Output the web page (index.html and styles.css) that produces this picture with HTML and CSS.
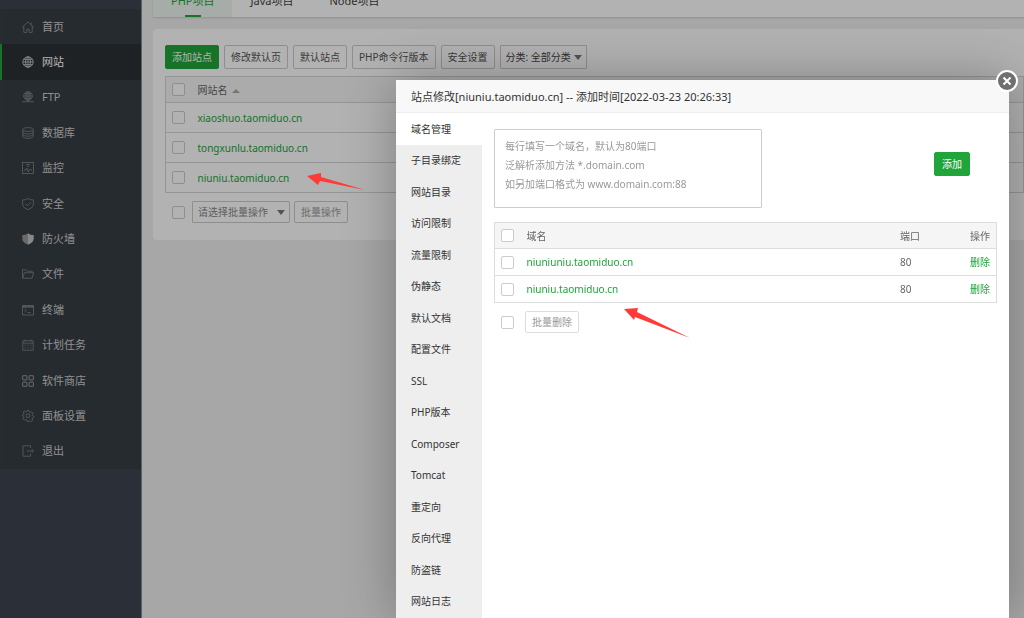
FILE: index.html
```html
<!DOCTYPE html>
<html lang="zh-CN">
<head>
  <meta charset="UTF-8" />
  <meta name="viewport" content="width=device-width, initial-scale=1.0"/>
  <title>网站</title>
  <link rel="stylesheet" href="styles.css">
</head>
<body>

  <div class="app">
    <nav class="sidebar">
      <ul class="menu">
        <li><a href="#"><svg viewBox="0 0 12 12"><path d="M.3 6.400 6 .9l5.700 5.500M1.800 5.200v6.200h3V8.200h2.400v3.200h3V5.200M9.300 1.500v2"/></svg>首页</a></li>
        <li class="active"><a href="#"><svg viewBox="0 0 12 12"><circle cx="6" cy="6" r="5.200"/><ellipse cx="6" cy="6" rx="2.400" ry="5.200"/><path d="M6 .8v10.400M.8 6h10.400M1.600 3.400h8.800M1.600 8.600h8.800"/></svg>网站</a></li>
        <li><a href="#"><svg viewBox="0 0 12 12"><circle cx="6" cy="5" r="4.300"/><ellipse cx="6" cy="5" rx="2" ry="4.300"/><path d="M6 .7v10M1.700 5h8.600M2.400 2.800h7.200M2.400 7.200h7.200M0 10.700h12"/></svg>FTP</a></li>
        <li><a href="#"><svg viewBox="0 0 12 12"><ellipse cx="6" cy="2.500" rx="5.200" ry="1.900"/><path d="M.8 2.500v7c0 2.500 10.400 2.500 10.400 0v-7M.8 5c0 2.500 10.400 2.500 10.400 0M.8 7.300c0 2.500 10.400 2.500 10.400 0"/></svg>数据库</a></li>
        <li><a href="#"><svg viewBox="0 0 12 12"><rect x=".5" y=".5" width="11" height="11"/><path d="M2 8h1.800l1-2 1.500 4 1.500-3 .8 1H10M4 2.500h4M5 4.200h2"/></svg>监控</a></li>
        <li><a href="#"><svg viewBox="0 0 12 12"><path d="M6 .5c1.800 1.200 3.500 1.400 5.400 1.400V6c0 2.800-2.400 4.600-5.400 5.600C3 10.600.6 8.800.6 6V1.900C2.500 1.900 4.200 1.700 6 .5zM3.400 5.700l2 2 3.500-3.500"/></svg>安全</a></li>
        <li><a href="#"><svg viewBox="0 0 12 12"><path class="shield-left" d="M6 .2v11.600C2.500 10.200.3 8.500.3 5.800V2C2.500 2 4.300 1.500 6 .2z"/><path class="shield-right" d="M6 .2v11.600c3.500-1.600 5.700-3.300 5.700-6V2C9.500 2 7.700 1.500 6 .2z"/></svg>防火墙</a></li>
        <li><a href="#"><svg viewBox="0 0 12 12"><path d="M.5 10.200V1.800h3.300L5 3.200h5.200v1.500M.5 10.200l2-5.500h9.200l-1.700 5.500z"/></svg>文件</a></li>
        <li><a href="#"><svg viewBox="0 0 12 12"><path d="M.5 1.500h11v9.500H.5zM.5 2.500h11M.5 3.200h11M2.500 5l1.800 1.500L2.500 8M5.500 8.500h3"/></svg>终端</a></li>
        <li><a href="#"><svg viewBox="0 0 12 12"><path d="M.8 1.800h10.400v9.400H.8zM.8 4.200h10.400M3.200.6v2M8.800.6v2M2.500 6.200h1.200M5.400 6.200h1.200M8.300 6.200h1.200M2.500 8.800h1.200M5.400 8.800h1.200M8.300 8.800h1.200"/></svg>计划任务</a></li>
        <li><a href="#"><svg class="bold" viewBox="0 0 12 12"><rect x=".6" y=".6" width="4.300" height="4.300" rx="1"/><rect x="7.100" y=".6" width="4.300" height="4.300" rx="1"/><rect x=".6" y="7.100" width="4.300" height="4.300" rx="1"/><rect x="7.100" y="7.100" width="4.300" height="4.300" rx="1"/></svg>软件商店</a></li>
        <li><a href="#"><svg viewBox="0 0 12 12"><path d="M5 .6h2l.3 1.500 1 .5 1.400-.8 1.300 1.400-.8 1.300.3 1 1.200.5v1.500l-1.300.5-.4 1 .7 1.300-1.200 1.300-1.400-.7-.9.400L6.800 11.400H5.200l-.5-1.500-.9-.4-1.400.7-1.200-1.300.7-1.300-.4-1L.4 6.100V4.900l1.200-.5.300-1-.7-1.300L2.400.9l1.400.9 1-.4z"/><circle cx="6" cy="5.800" r="1.900"/></svg>面板设置</a></li>
        <li><a href="#"><svg viewBox="0 0 12 12"><path d="M8.500 3V.8H1v10.400h7.500V9M5 6h6.500M9.700 4.200 11.500 6 9.700 7.800"/></svg>退出</a></li>
      </ul>
    </nav>

    <main class="main">
      <div class="tabs">
        <a class="tab on" href="#">PHP项目</a>
        <a class="tab" href="#">Java项目</a>
        <a class="tab" href="#">Node项目</a>
      </div>

      <section class="card">
        <div class="toolbar">
          <button class="btn btn-success">添加站点</button>
          <button class="btn">修改默认页</button>
          <button class="btn">默认站点</button>
          <button class="btn">PHP命令行版本</button>
          <button class="btn">安全设置</button>
          <span class="select-wrap">
            <select class="type-select" aria-label="分类"><option>分类: 全部分类</option></select>
          </span>
        </div>

        <table class="table site-table">
          <thead>
            <tr><th class="check"><input type="checkbox" aria-label="全选"></th><th>网站名<i class="sort"></i></th></tr>
          </thead>
          <tbody>
            <tr><td class="check"><input type="checkbox" aria-label="xiaoshuo.taomiduo.cn"></td><td><a href="#">xiaoshuo.taomiduo.cn</a></td></tr>
            <tr><td class="check"><input type="checkbox" aria-label="tongxunlu.taomiduo.cn"></td><td><a href="#">tongxunlu.taomiduo.cn</a></td></tr>
            <tr><td class="check"><input type="checkbox" aria-label="niuniu.taomiduo.cn"></td><td><a href="#">niuniu.taomiduo.cn</a></td></tr>
          </tbody>
        </table>

        <div class="batch">
          <input type="checkbox" aria-label="全选">
          <span class="select-wrap">
            <select class="batch-select" aria-label="批量操作"><option>请选择批量操作</option></select>
          </span>
          <button class="btn" disabled>批量操作</button>
        </div>
      </section>
    </main>
  </div>

  <div class="shade"></div>
  <svg class="arrow arrow-site" viewBox="0 0 60 20"><path d="M1 4 15 1v4l44 13-45-9-2 4z"/></svg>

  <div class="modal" role="dialog" aria-labelledby="modalTitle">
    <button class="close" aria-label="关闭"><svg viewBox="0 0 24 24"><circle cx="12" cy="12" r="10"/><path d="m8.500 8.500 7 7M15.500 8.500l-7 7"/></svg></button>
    <header class="modal-head" id="modalTitle">站点修改[niuniu.taomiduo.cn] -- 添加时间[2022-03-23 20:26:33]</header>
    <div class="modal-body">
      <div class="modal-side">
        <ul class="side-list">
          <li class="on"><a href="#">域名管理</a></li>
          <li><a href="#">子目录绑定</a></li>
          <li><a href="#">网站目录</a></li>
          <li><a href="#">访问限制</a></li>
          <li><a href="#">流量限制</a></li>
          <li><a href="#">伪静态</a></li>
          <li><a href="#">默认文档</a></li>
          <li><a href="#">配置文件</a></li>
          <li><a href="#">SSL</a></li>
          <li><a href="#">PHP版本</a></li>
          <li><a href="#">Composer</a></li>
          <li><a href="#">Tomcat</a></li>
          <li><a href="#">重定向</a></li>
          <li><a href="#">反向代理</a></li>
          <li><a href="#">防盗链</a></li>
          <li><a href="#">网站日志</a></li>
        </ul>
      </div>

      <div class="modal-content">
        <div class="add-domain">
          <textarea aria-label="域名" placeholder="每行填写一个域名，默认为80端口&#10;泛解析添加方法 *.domain.com&#10;如另加端口格式为 www.domain.com:88"></textarea>
          <button class="btn btn-success">添加</button>
        </div>

        <div class="domain-list">
          <table class="table domain-table">
            <thead>
              <tr><th class="check"><input type="checkbox" aria-label="全选"></th><th>域名</th><th class="port">端口</th><th class="op">操作</th></tr>
            </thead>
            <tbody>
              <tr><td class="check"><input type="checkbox" aria-label="niuniuniu.taomiduo.cn"></td><td><a href="#">niuniuniu.taomiduo.cn</a></td><td class="port">80</td><td class="op"><a href="#">删除</a></td></tr>
              <tr><td class="check"><input type="checkbox" aria-label="niuniu.taomiduo.cn"></td><td><a href="#">niuniu.taomiduo.cn</a></td><td class="port">80</td><td class="op"><a href="#">删除</a></td></tr>
            </tbody>
          </table>
          <svg class="arrow arrow-domain" viewBox="0 0 68 32"><path d="M1 2 15 1l-1 4 53 26-55-21-1 3z"/></svg>
        </div>

        <div class="batch batch-domain">
          <input type="checkbox" aria-label="全选">
          <button class="btn" disabled>批量删除</button>
        </div>
      </div>
    </div>
  </div>

</body>
</html>
```
FILE: styles.css
```css
:root {
  --green: #20a53a;
  --line: #ddd;
  --text: #666;
  --arrow: #ff3b38;
}

* { box-sizing: border-box; }

body {
  margin: 0;
  height: 100vh;
  overflow: hidden;
  background: #f0f0f0;
  color: var(--text);
  font: 10px/18px "Noto Sans", "Noto Sans CJK SC", sans-serif;
}

button, select, textarea, input {
  font: inherit;
  color: inherit;
  margin: 0;
}

a {
  color: var(--green);
  text-decoration: none;
}

ul {
  list-style: none;
  margin: 0;
  padding: 0;
}

.app {
  display: flex;
  height: 100vh;
}

/* sidebar */
.sidebar {
  flex: none;
  width: 142px;
  padding-top: 9px;
  background: #3e444f;
  border-right: 1px solid #858b92;
}

.menu {
  display: grid;
  grid-auto-rows: 1fr;
  min-height: 460px;
  background: #373e45;
}

.menu li {
  border-left: 2px solid #3c4042;
}

.menu a {
  display: flex;
  align-items: center;
  gap: 8px;
  height: 100%;
  padding-left: 20px;
  font-size: 11px;
  color: #cfcfcf;
}

.menu svg {
  width: 12px;
  height: 12px;
  fill: none;
  stroke: #85898d;
  stroke-width: 0.8;
}

.menu svg.bold { stroke-width: 1.2; }

.menu .active {
  background: #2d3136;
  border-left-color: var(--green);
}

.menu .active a { color: #fff; }
.menu .active svg { stroke: #d0d0d0; }

.menu .shield-left { fill: #999; stroke: none; }
.menu .shield-right { fill: #c4c4c4; stroke: none; }

/* main page */
.main {
  flex: 1;
  min-width: 0;
  margin-top: -17px;
  padding-left: 11px;
}

.tabs {
  display: flex;
  height: 34px;
  background: #fff;
  box-shadow: 0 1px 2px #ccc;
}

.tab {
  position: relative;
  padding: 9px 18px;
  font-size: 11px;
  color: #444;
}

.tab.on {
  background: #eef8f1;
  color: var(--green);
}

.tab.on::after {
  content: "";
  position: absolute;
  left: 50%;
  bottom: 0;
  width: 16px;
  height: 2px;
  margin-left: -8px;
  background: var(--green);
}

.card {
  margin-top: 12px;
  padding: 16px 0 17px 12px;
  background: #fff;
  border-radius: 4px 0 0 4px;
}

.toolbar {
  display: flex;
  gap: 5px;
  margin-bottom: 7px;
}

.btn {
  height: 24px;
  padding: 0 6px;
  background: #fff;
  border: 1px solid #ccc;
  border-radius: 2px;
  line-height: 20px;
  color: #555;
  white-space: nowrap;
  cursor: pointer;
}

.btn-success {
  background: var(--green);
  border-color: var(--green);
  color: #fff;
}

.btn:disabled {
  height: 22px;
  color: #999;
  cursor: default;
}

.select-wrap {
  position: relative;
  display: flex;
}

.select-wrap::after {
  content: "";
  position: absolute;
  right: 5px;
  top: 50%;
  margin-top: -2px;
  border: 4px solid transparent;
  border-top: 5px solid #777;
  border-bottom: 0;
  pointer-events: none;
}

select {
  appearance: none;
  height: 22px;
  padding: 0 5px;
  background: #fff;
  border: 1px solid #ccc;
  border-radius: 1px;
}

.type-select {
  width: 87px;
  height: 24px;
  color: #444;
}

.batch-select {
  width: 98px;
  color: #888;
}

input[type="checkbox"] {
  appearance: none;
  display: block;
  width: 13px;
  height: 13px;
  background: #fff;
  border: 1px solid #ccc;
  border-radius: 2px;
}

.table {
  width: 100%;
  border-collapse: collapse;
  border: 1px solid var(--line);
}

.table th, .table td {
  height: 30px;
  padding: 0;
  border-bottom: 1px solid var(--line);
  font-weight: 400;
  text-align: left;
}

.table th {
  height: 26px;
  background: #f5f5f5;
}

.table .check {
  width: 32px;
  padding-left: 6px;
}

.sort {
  display: inline-block;
  margin-left: 4px;
  vertical-align: middle;
  border: 4px solid transparent;
  border-bottom-color: #aaa;
  border-top: 0;
}

.site-table { --line: #d6d6d6; }

.batch {
  display: flex;
  align-items: center;
  gap: 4px;
  padding: 8px 0 0 7px;
}

.batch input { margin-right: 3px; }

/* dialog */
.shade {
  position: fixed;
  inset: 0;
  background: rgba(0, 0, 0, 0.3);
}

.arrow {
  position: absolute;
  fill: var(--arrow);
}

.arrow-site {
  left: 306px;
  top: 172px;
  width: 60px;
}

.modal {
  position: fixed;
  top: 80px;
  right: 15px;
  bottom: 0;
  left: 396px;
  display: flex;
  flex-direction: column;
  background: #fff;
  box-shadow: 1px 1px 50px rgba(0, 0, 0, 0.3);
}

.modal-head {
  height: 33px;
  padding-left: 15px;
  background: #f8f8f8;
  border-bottom: 1px solid #eee;
  font-size: 11px;
  line-height: 33px;
  color: #333;
  white-space: nowrap;
}

.close {
  position: absolute;
  top: -11px;
  right: -10px;
  width: 24px;
  height: 24px;
  padding: 0;
  background: none;
  border: 0;
  cursor: pointer;
}

.close svg {
  display: block;
  fill: #707070;
  stroke: #fff;
  stroke-width: 2;
}

.modal-body {
  display: flex;
  flex: 1;
  min-height: 0;
}

.modal-side {
  flex: none;
  width: 86px;
  background: #eee;
}

.side-list {
  display: grid;
  grid-auto-rows: 1fr;
  min-height: 504px;
}

.side-list a {
  display: flex;
  align-items: center;
  height: 100%;
  padding-left: 15px;
  color: #333;
}

.side-list .on { background: #fff; }

.modal-content {
  flex: 1;
  min-width: 0;
  padding: 16px 12px;
}

.add-domain {
  display: flex;
  align-items: center;
  justify-content: space-between;
  padding-right: 27px;
  margin-bottom: 14px;
}

.add-domain .btn {
  padding: 0 7px;
  margin-bottom: 9px;
}

textarea {
  width: 268px;
  height: 79px;
  padding: 7px 10px;
  border: 1px solid #ccc;
  border-radius: 1px;
  line-height: 19px;
  resize: none;
}

textarea::placeholder { color: #999; }

.domain-list { position: relative; }

.domain-table td { height: 27px; }
.domain-table .port { width: 70px; }

.domain-table .op {
  width: 26px;
  padding-right: 6px;
  text-align: right;
  white-space: nowrap;
}

.arrow-domain {
  left: 129px;
  top: 85px;
  width: 68px;
}

.batch-domain {
  gap: 8px;
  padding-top: 8px;
}

.batch-domain .btn { border-color: #ddd; }
```
